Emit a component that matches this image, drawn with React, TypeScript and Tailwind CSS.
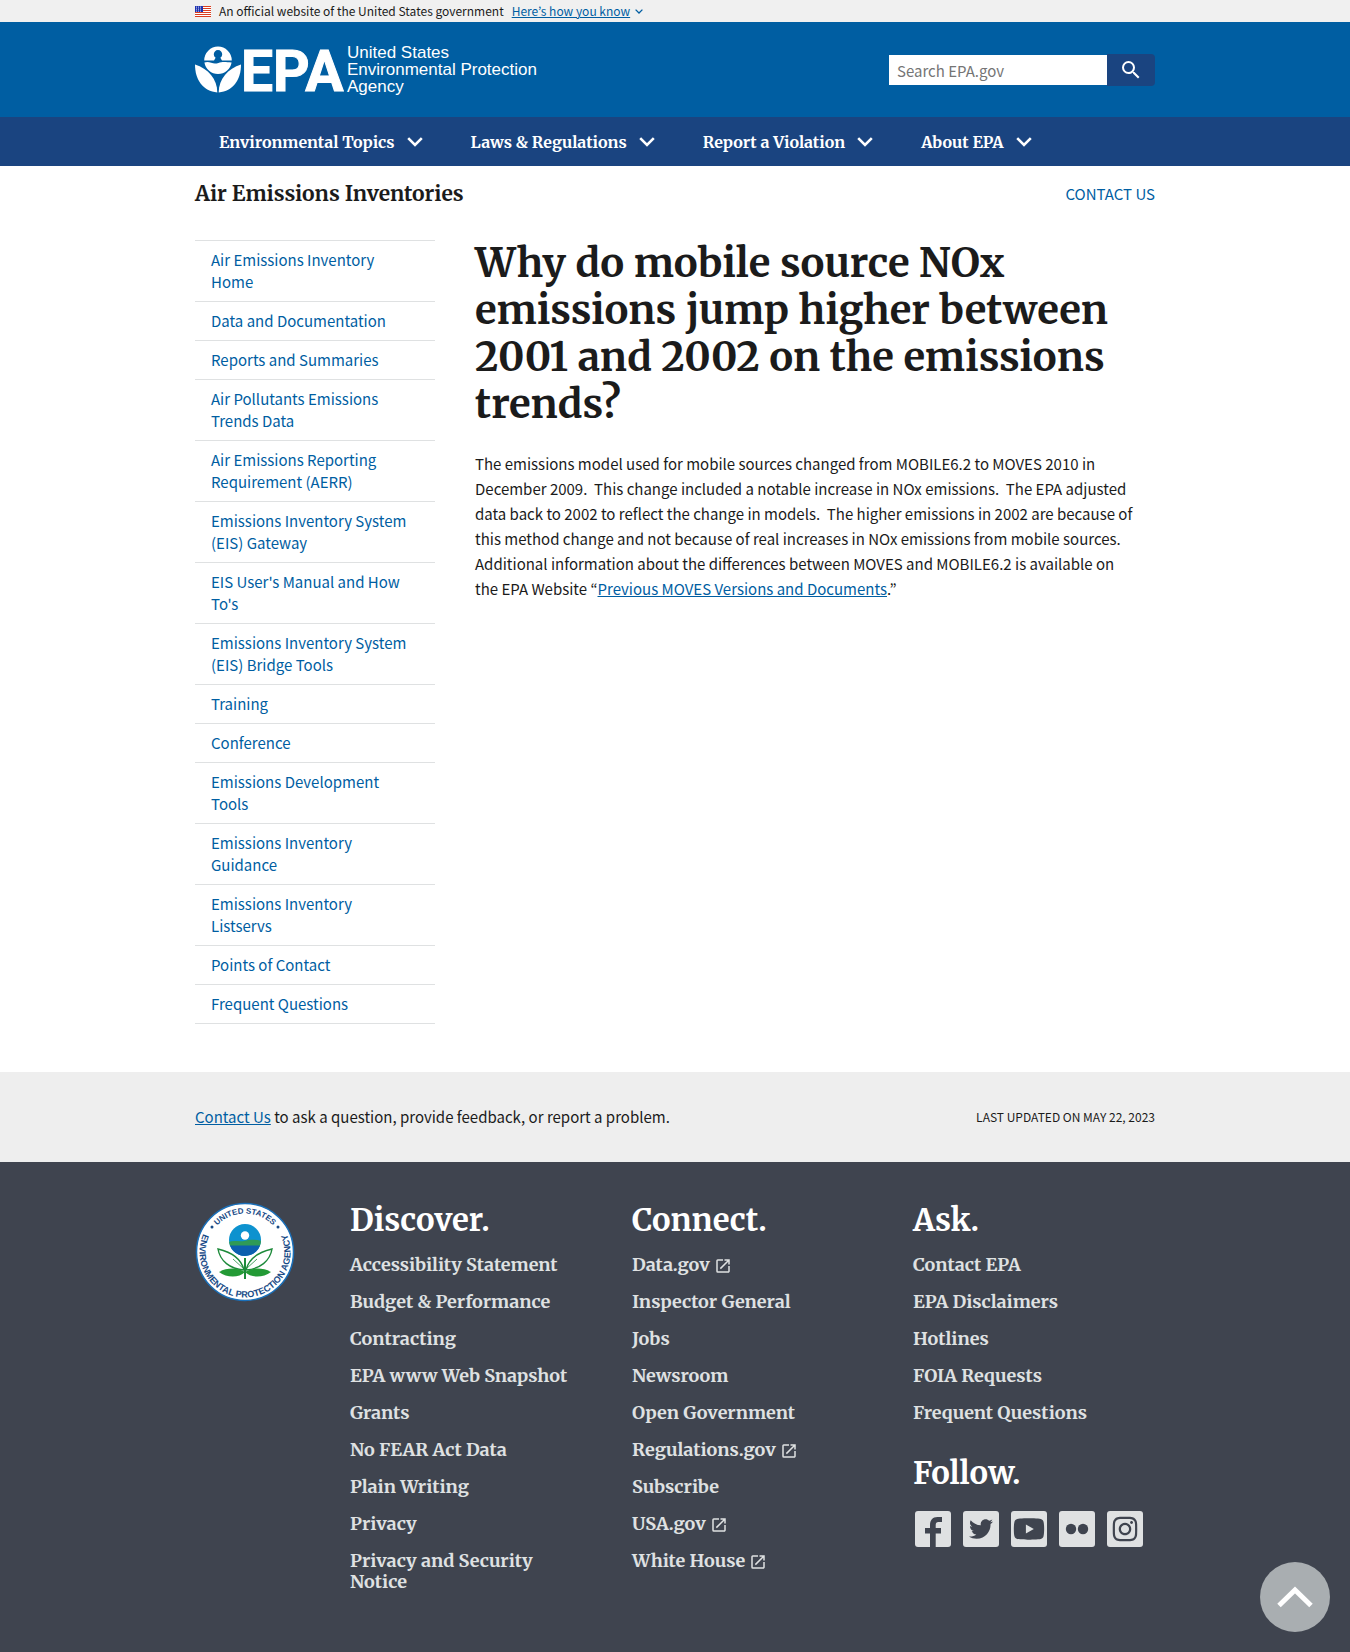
import type { ReactNode } from "react";
import { MdOpenInNew, MdSearch } from "react-icons/md";
import { FaInstagram, FaTwitter, FaYoutube } from "react-icons/fa";

const serif = "font-['Merriweather','Noto_Serif','DejaVu_Serif_Condensed',serif]";

const navItems = ["Environmental Topics", "Laws & Regulations", "Report a Violation", "About EPA"];

const sideItems = [
  "Air Emissions Inventory Home",
  "Data and Documentation",
  "Reports and Summaries",
  "Air Pollutants Emissions Trends Data",
  "Air Emissions Reporting Requirement (AERR)",
  "Emissions Inventory System (EIS) Gateway",
  "EIS User's Manual and How To's",
  "Emissions Inventory System (EIS) Bridge Tools",
  "Training",
  "Conference",
  "Emissions Development Tools",
  "Emissions Inventory Guidance",
  "Emissions Inventory Listservs",
  "Points of Contact",
  "Frequent Questions",
];

type FooterLink = { label: string; external?: boolean };

const discover: FooterLink[] = [
  { label: "Accessibility Statement" },
  { label: "Budget & Performance" },
  { label: "Contracting" },
  { label: "EPA www Web Snapshot" },
  { label: "Grants" },
  { label: "No FEAR Act Data" },
  { label: "Plain Writing" },
  { label: "Privacy" },
  { label: "Privacy and Security Notice" },
];

const connect: FooterLink[] = [
  { label: "Data.gov", external: true },
  { label: "Inspector General" },
  { label: "Jobs" },
  { label: "Newsroom" },
  { label: "Open Government" },
  { label: "Regulations.gov", external: true },
  { label: "Subscribe" },
  { label: "USA.gov", external: true },
  { label: "White House", external: true },
];

const ask: FooterLink[] = [
  { label: "Contact EPA" },
  { label: "EPA Disclaimers" },
  { label: "Hotlines" },
  { label: "FOIA Requests" },
  { label: "Frequent Questions" },
];

function Container({ className = "", children }: { className?: string; children: ReactNode }) {
  return <div className={`mx-auto w-full max-w-[1024px] px-8 ${className}`}>{children}</div>;
}

function Flag() {
  return (
    <svg viewBox="0 0 16 11" className="h-[11px] w-4" aria-hidden="true">
      <rect width="16" height="11" fill="#fff" />
      {[0, 2, 4, 6, 8, 10].map((y) => (
        <rect key={y} y={y} width="16" height="1" fill="#db3e1f" />
      ))}
      <rect width="8" height="6" fill="#1e33b1" />
      {[1, 3, 5].map((y) =>
        [1, 3, 5].map((x) => <rect key={`${x}-${y}`} x={x} y={y - 0.3} width="1" height="0.8" fill="#fff" />),
      )}
    </svg>
  );
}

function Chevron({ className }: { className: string }) {
  return (
    <svg viewBox="0 0 16 10" className={className} fill="none" stroke="currentColor" strokeWidth="2.6" aria-hidden="true">
      <path d="M1.2 1.2 8 8l6.8-6.8" />
    </svg>
  );
}

function Logo() {
  return (
    <svg viewBox="0 0 350 50" className="h-[50px] w-[350px] overflow-visible" fill="#fff" role="img" aria-label="EPA home">
      <path d="M9.2 15.4a13.8 13.8 0 0 1 27.6 0H27c-.9-1.1-1.5-2-1.5-2.8a4.2 4.2 0 1 0-5 0c0 .8-.6 1.7-1.5 2.8Z" />
      <path d="M9.4 17.6c2.3-.9 4.500-.6 6.800.2 2.600.9 4.800.9 7.200.1 3.300-1.100 6.500-1.200 13.200-.3A13.800 13.800 0 0 1 9.400 17.600Z" />
      <path d="M0 19.500C0 35 8 46 22.300 47.500 22.300 34 13 23.500 0 19.500Z" />
      <path d="M46 19.500C46 35 38 46 23.700 47.500 23.700 34 33 23.500 46 19.500Z" />
      <text x="46" y="46" fontFamily="Roboto, 'Liberation Sans', sans-serif" fontWeight="700" fontSize="57" stroke="#fff" strokeWidth="1">
        EPA
      </text>
      <g fontFamily="'Liberation Sans', sans-serif" fontSize="17">
        <text x="152" y="13">United States</text>
        <text x="152" y="30">Environmental Protection</text>
        <text x="152" y="47">Agency</text>
      </g>
    </svg>
  );
}

function Seal() {
  return (
    <svg viewBox="0 0 100 100" className="size-[100px]" role="img" aria-label="U.S. EPA seal">
      <defs>
        <path id="seal-top" d="M11.500 50a38.500 38.500 0 0 1 77 0" />
        <path id="seal-bottom" d="M20 15.800A45.500 45.500 0 1 0 80 15.800" />
        <clipPath id="seal-disc">
          <circle cx="50" cy="38" r="16" />
        </clipPath>
      </defs>
      <circle cx="50" cy="50" r="48.500" fill="#fff" stroke="#1a6fb8" strokeWidth="1.500" />
      <g fill="#174a86" fontFamily="'Liberation Sans', sans-serif" fontWeight="700" fontSize="8">
        <text textAnchor="middle">
          <textPath href="#seal-top" startOffset="50%">UNITED STATES</textPath>
        </text>
        <text textAnchor="middle" fontSize="9">
          <textPath href="#seal-bottom" startOffset="50%">ENVIRONMENTAL PROTECTION AGENCY</textPath>
        </text>
        <circle cx="17" cy="25" r="1.500" />
        <circle cx="83" cy="25" r="1.500" />
      </g>
      <g clipPath="url(#seal-disc)">
        <rect x="34" y="22" width="32" height="32" fill="#0d92cf" />
        <circle cx="50" cy="33.500" r="4.200" fill="#fff" />
        <path d="M33 40c6-2 11 0 16-1s11-2 18 0v5H33Z" fill="#2f9a57" />
        <path d="M33 43.500h34V55H33Z" fill="#0c5fae" />
      </g>
      <g stroke="#1d8a3a" strokeWidth="1.400" fill="#fff">
        <path d="M49 68C46 56 36 50 23 47c2 12 12 20 26 21Z" />
        <path d="M51 68c3-12 13-18 26-21-2 12-12 20-26 21Z" />
        <path d="M49 67 38 57M51 67l11-10" strokeWidth="0.800" />
      </g>
      <path d="M50 70c-6-4-17-5-26 0 8 6 20 6 26 0Zm0 0c6-4 17-5 26 0-8 6-20 6-26 0Z" fill="#239a35" />
      <path d="M50 56v21" stroke="#1d8a3a" strokeWidth="2" />
    </svg>
  );
}

function FooterHeading({ children }: { children: ReactNode }) {
  return <h2 className={`${serif} text-[31px] leading-9 font-bold text-white`}>{children}</h2>;
}

function FooterList({ items }: { items: FooterLink[] }) {
  return (
    <ul className="mt-2">
      {items.map((item) => (
        <li key={item.label} className="py-2">
          <a href="#" className={`${serif} block text-[18px] leading-[21px] font-bold text-[#dfe1e2]`}>
            {item.label}
            {item.external && <MdOpenInNew className="ml-1 inline size-[18px]" aria-hidden="true" />}
          </a>
        </li>
      ))}
    </ul>
  );
}

function SocialLink({ label, children }: { label: string; children: ReactNode }) {
  return (
    <a
      href="#"
      aria-label={label}
      className="flex size-9 items-center justify-center overflow-hidden rounded-[3px] bg-[#dfe1e2] text-[#3f444f]"
    >
      {children}
    </a>
  );
}

export default function App() {
  return (
    <div className="flex min-h-screen flex-col bg-white font-['Noto_Sans_CJK_KR','Open_Sans',sans-serif] text-[15px] text-[#1b1b1b]">
      <section className="bg-[#f0f0f0]" aria-label="Official website">
        <Container className="flex h-[22px] items-center gap-2 text-xs leading-4">
          <Flag />
          <span>An official website of the United States government</span>
          <button className="flex items-center gap-1 text-[#005ea2]">
            <span className="underline">Here’s how you know</span>
            <Chevron className="ml-px h-[5px] w-2" />
          </button>
        </Container>
      </section>

      <header>
        <div className="bg-[#005ea2]">
          <Container className="flex h-[95px] items-start justify-between">
            <a href="#" className="mt-[23px]">
              <Logo />
            </a>
            <form role="search" className="mt-8 flex items-center" onSubmit={(e) => e.preventDefault()}>
              <input
                type="search"
                aria-label="Search EPA.gov"
                placeholder="Search EPA.gov"
                className="h-[30px] w-[218px] bg-white px-2 placeholder:text-[#757575]"
              />
              <button
                aria-label="Search"
                className="flex h-8 w-12 items-center justify-center rounded-r bg-[#1a4480] text-white"
              >
                <MdSearch className="size-6" />
              </button>
            </form>
          </Container>
        </div>
        <nav className="bg-[#1a4480]" aria-label="Primary">
          <Container>
            <ul className="flex h-[49px] items-center">
              {navItems.map((item) => (
                <li key={item}>
                  <button className={`${serif} flex items-center gap-3 px-6 text-base leading-5 font-bold text-white`}>
                    {item}
                    <Chevron className="h-[10px] w-4" />
                  </button>
                </li>
              ))}
            </ul>
          </Container>
        </nav>
      </header>

      <Container className="pt-4 pb-12">
        <div className="flex items-center justify-between">
          <h2 className={`${serif} text-[21px] leading-6 font-bold`}>Air Emissions Inventories</h2>
          <a href="#" className="leading-6 text-[#005ea2]">CONTACT US</a>
        </div>
        <div className="mt-[34px] flex items-start gap-10">
          <nav className="w-60 shrink-0" aria-label="Side">
            <ul className="border-b border-[#dfe1e2]">
              {sideItems.map((item) => (
                <li key={item} className="border-t border-[#dfe1e2]">
                  <a href="#" className="block py-2 pr-6 pl-4 leading-[22px] text-[#005ea2]">
                    {item}
                  </a>
                </li>
              ))}
            </ul>
          </nav>
          <main className="min-w-0 flex-1">
            <h1 className={`${serif} text-[40px] leading-[47px] font-bold`}>
              Why do mobile source NOx emissions jump higher between 2001 and 2002 on the emissions trends?
            </h1>
            <p className="mt-[23px] pr-5 leading-[25px]">
              The emissions model used for mobile sources changed from MOBILE6.2 to MOVES 2010 in December
              2009.&nbsp; This change included a notable increase in NOx emissions.&nbsp; The EPA adjusted data back
              to 2002 to reflect the change in models.&nbsp; The higher emissions in 2002 are because of this method
              change and not because of real increases in NOx emissions from mobile sources.&nbsp; Additional
              information about the differences between MOVES and MOBILE6.2 is available on the EPA Website “
              <a href="#" className="text-[#005ea2] underline">Previous MOVES Versions and Documents</a>.”
            </p>
          </main>
        </div>
      </Container>

      <footer className="flex flex-1 flex-col">
        <div className="bg-[#eeeeee]">
          <Container className="flex h-[90px] items-center justify-between">
            <p>
              <a href="#" className="text-[#005ea2] underline">Contact Us</a> to ask a question, provide feedback, or
              report a problem.
            </p>
            <p className="text-xs">LAST UPDATED ON MAY 22, 2023</p>
          </Container>
        </div>
        <div className="flex-1 bg-[#3f444f]">
          <Container className="flex pt-10 pb-12">
            <div className="w-[155px] shrink-0">
              <Seal />
            </div>
            <div className="grid flex-1 grid-cols-[282px_281px_1fr]">
              <section className="pr-14">
                <FooterHeading>Discover.</FooterHeading>
                <FooterList items={discover} />
              </section>
              <section>
                <FooterHeading>Connect.</FooterHeading>
                <FooterList items={connect} />
              </section>
              <section>
                <FooterHeading>Ask.</FooterHeading>
                <FooterList items={ask} />
                <div className="mt-6">
                  <FooterHeading>Follow.</FooterHeading>
                  <div className="mt-5 flex gap-3 pl-0.5">
                    <SocialLink label="Facebook">
                      <svg viewBox="0 0 36 36" className="size-9" fill="currentColor" aria-hidden="true">
                        <path d="M15 36V22.500h-5V17h5v-2.500C15 9 17.500 6 22.500 6H27v5h-3.500c-2 0-2.800 1-2.800 3v3H26v5.500h-5.300V36Z" />
                      </svg>
                    </SocialLink>
                    <SocialLink label="Twitter">
                      <FaTwitter className="size-6" />
                    </SocialLink>
                    <SocialLink label="YouTube">
                      <FaYoutube className="size-8" />
                    </SocialLink>
                    <SocialLink label="Flickr">
                      <svg viewBox="0 0 36 36" className="size-9" fill="currentColor" aria-hidden="true">
                        <circle cx="12" cy="18" r="5.200" />
                        <circle cx="24" cy="18" r="5.200" />
                      </svg>
                    </SocialLink>
                    <SocialLink label="Instagram">
                      <FaInstagram className="size-7" />
                    </SocialLink>
                  </div>
                </div>
              </section>
            </div>
          </Container>
        </div>
      </footer>

      <button
        aria-label="Back to top"
        className="fixed right-5 bottom-5 flex size-[70px] items-center justify-center rounded-full bg-[#a9aeb1] text-white"
      >
        <svg viewBox="0 0 36 22" className="h-[22px] w-9" fill="none" stroke="currentColor" strokeWidth="5" aria-hidden="true">
          <path d="M2 19.500 18 4l16 15.500" />
        </svg>
      </button>
    </div>
  );
}
